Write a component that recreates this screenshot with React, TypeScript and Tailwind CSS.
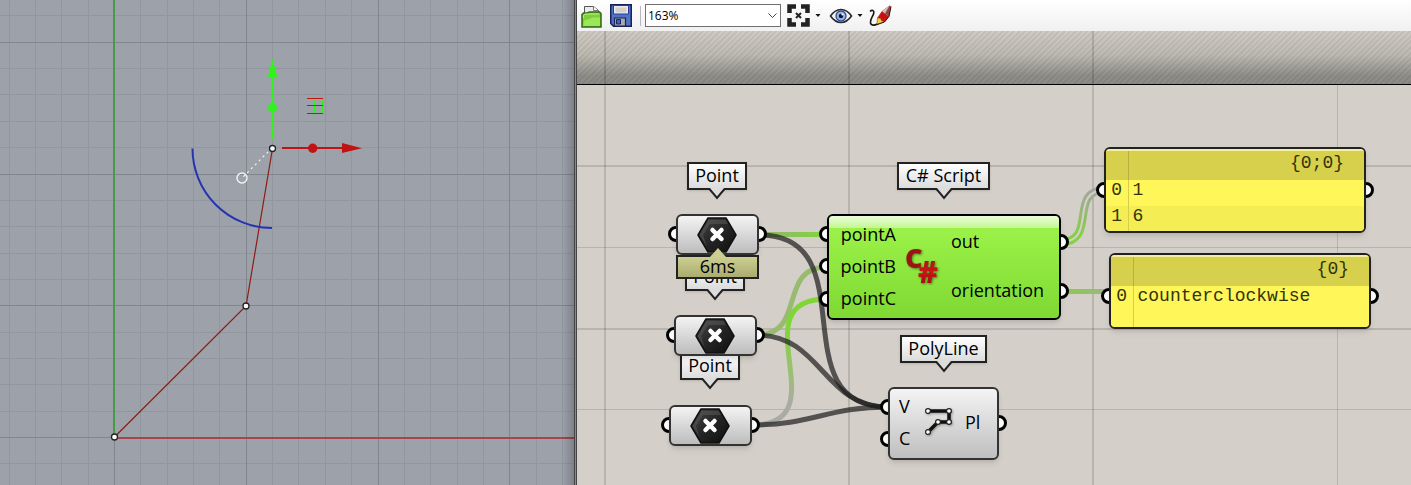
import React from "react";

/* ---------- Viewport with the drawn polyline ---------- */

const Vertex = ({ x, y }: { x: number; y: number }) => (
  <circle cx={x} cy={y} r="3" fill="#fff" stroke="#222" strokeWidth="1.3" />
);

const GRID_STEP = 26.35;
const ORIGIN = { x: 114, y: 437 };

const gridLines = (origin: number, from: number, to: number, major: boolean) => {
  const lines: number[] = [];
  for (let k = from; k <= to; k++) {
    if ((k % 5 === 0) === major) lines.push(Math.round(origin + k * GRID_STEP));
  }
  return lines;
};

const gridPath = (major: boolean) =>
  gridLines(ORIGIN.x, -4, 18, major).map((x) => `M${x + 0.5} 0V4000`).join("") +
  gridLines(ORIGIN.y, -17, 120, major).map((y) => `M0 ${y + 0.5}H600`).join("");

function Viewport() {
  return (
    <section aria-label="Top viewport" className="relative w-[574px] shrink-0 overflow-hidden bg-[#9da2aa]">
      <svg className="absolute inset-0 h-full w-full">
        <path d={gridPath(false)} stroke="#92979f" />
        <path d={gridPath(true)} stroke="#81868e" />
        <path d="M114 0V437" stroke="#489a48" strokeWidth="2" />
        <path d="M114 438H574" stroke="#a5444b" strokeWidth="2" />

        <path d="M272.500 148.500L246 306L114.500 437" fill="none" stroke="#8e1c14" strokeWidth="1.2" />
        <path d="M192.500 148.500A79.500 79.500 0 0 0 272 228" fill="none" stroke="#2634b4" strokeWidth="2" />

        <path d="M272 148L242 178" stroke="#f4f4f4" strokeWidth="1.2" strokeDasharray="2 3.500" />
        <circle cx="242" cy="178" r="5" fill="none" stroke="#f4f4f4" strokeWidth="1.400" />
        <path d="M272.500 139V78" stroke="#33f11f" strokeWidth="2" />
        <circle cx="272.500" cy="108" r="4.700" fill="#33f11f" />
        <path d="M272.500 58.500L277.500 78H267.500Z" fill="#33f11f" />
        <path d="M282 148H343" stroke="#c01414" strokeWidth="2" />
        <circle cx="312.700" cy="148.300" r="4.700" fill="#c01414" />
        <path d="M362 148.200L342 153V143Z" fill="#c01414" />

        <path d="M307.500 98V114M314.500 98V114M322.500 98V114" stroke="#33f11f" strokeWidth="1" />
        <path d="M307 98.500H323M307 105.500H323M307 113.500H323" stroke="#c01414" strokeWidth="1" />

        <Vertex x={272.5} y={148.5} />
        <Vertex x={246} y={306} />
        <Vertex x={114.5} y={437} />
      </svg>
      <div className="absolute inset-y-0 right-0 w-3 bg-gradient-to-r from-transparent to-black/20" />
    </section>
  );
}

/* ---------- Toolbar ---------- */

const Caret = () => (
  <svg width="6" height="4" viewBox="0 0 6 4">
    <path d="M0.500 0H5.500L3 3Z" fill="#111" />
  </svg>
);

function OpenIcon() {
  return (
    <svg width="21" height="24" viewBox="0 0 21 24">
      <path d="M3.500 12V2.500H12.500L17.500 6.500V12" fill="#ececec" stroke="#555" />
      <path d="M12.500 2.500V6.500H17" fill="#fff" stroke="#777" />
      <path d="M1 23V10.500L2.500 9H6.500L8.500 8H18.500L20 9.500V23Z" fill="#7fce39" stroke="#2b6a13" strokeWidth="1.500" />
      <path d="M2 22L3.500 16L9 15L11 13.500H19V22Z" fill="#9be659" />
      <path d="M2.500 14V11.500L4 10H18" fill="none" stroke="#b8f080" />
    </svg>
  );
}

function SaveIcon() {
  return (
    <svg width="22" height="23" viewBox="0 0 22 23">
      <path d="M0.750 0.750H21.250V22.250H3.500L0.750 19.500Z" fill="#4f74c4" stroke="#18215a" strokeWidth="1.500" />
      <path d="M3.500 1.500H18.500V10H3.500Z" fill="#ecebea" stroke="#2635a8" />
      <path d="M5.500 3.500H16.500V8.500H5.500Z" fill="#d3d0cb" />
      <path d="M4.500 14H15.500V22H4.500Z" fill="#a9a9a9" stroke="#1c2450" strokeWidth="1.200" />
      <path d="M6.500 15.500H10.500V20H6.500Z" fill="#3e60cc" stroke="#17246e" />
    </svg>
  );
}

function ZoomExtentsIcon() {
  return (
    <svg width="23" height="23" viewBox="0 0 23 23">
      <path
        d="M2.500 9V2.500H9M14 2.500H20.500V9M20.500 14V20.500H14M9 20.500H2.500V14"
        fill="none"
        stroke="#222"
        strokeWidth="4.500"
      />
      <path d="M9 9L14 14M14 9L9 14" stroke="#222" strokeWidth="2" />
    </svg>
  );
}

function EyeIcon() {
  return (
    <svg width="24" height="16" viewBox="0 0 24 16">
      <path d="M1.500 8Q6 1.500 12 1.500T22.500 8Q18 14.500 12 14.500T1.500 8Z" fill="#f4f4f4" stroke="#2b2b2b" strokeWidth="1.600" />
      <circle cx="12" cy="8" r="5" fill="#9db8e0" stroke="#2b4c9a" strokeWidth="1.300" />
      <circle cx="12" cy="8" r="2.300" fill="#101830" />
      <circle cx="13.500" cy="6.500" r="1.100" fill="#fff" />
    </svg>
  );
}

function SketchIcon() {
  return (
    <svg width="23" height="22" viewBox="0 0 23 22">
      <path d="M1 6.500C3 4.500 5.300 5.500 4.800 8C4 12 0.800 14 1.500 18C2.500 21.500 7 20 9.500 18.500" fill="none" stroke="#151515" strokeWidth="1.600" />
      <path d="M8 19.500L8.500 12.500L12 14L15 17Z" fill="#ead23c" stroke="#6b5a10" strokeWidth="0.600" />
      <path d="M8.500 12.500L13 6L20 11.500L15.500 17L12.500 16L11.500 13.500Z" fill="#c81212" />
      <path d="M13 6L20.500 0.500L22 1.500L20 11.500Z" fill="#8d4743" />
      <path d="M13 6L20.500 0.500L16 8.500Z" fill="#d9bab4" />
      <path d="M8 19.500L15.500 17L20 11.500L22 1.500" fill="none" stroke="#3d0b0b" />
    </svg>
  );
}

function Toolbar() {
  return (
    <header className="flex h-[31px] items-center bg-gradient-to-b from-white to-[#f0f0f0] pl-1">
      <button aria-label="Open file" className="mr-2">
        <OpenIcon />
      </button>
      <button aria-label="Save file">
        <SaveIcon />
      </button>
      <span className="mx-2 h-5 w-px bg-[#b8b8b8]" />
      <div className="relative -ml-1">
        <select
          aria-label="Zoom level"
          className="block h-[23px] w-[136px] appearance-none border border-[#707070] bg-white px-[2px] font-['Open_Sans',sans-serif] text-[12px] leading-none font-normal text-black"
        >
          <option>163%</option>
        </select>
        <svg className="pointer-events-none absolute top-2 right-1" width="9" height="7" viewBox="0 0 9 7">
          <path d="M0.500 1.500L4.500 5.500L8.500 1.500" fill="none" stroke="#444" />
        </svg>
      </div>
      <button aria-label="Zoom extents" className="ml-[6px] flex items-center gap-[5px]">
        <ZoomExtentsIcon />
        <Caret />
      </button>
      <button aria-label="Preview" className="ml-2 flex items-center gap-1">
        <EyeIcon />
        <Caret />
      </button>
      <button aria-label="Sketch" className="ml-[6px]">
        <SketchIcon />
      </button>
    </header>
  );
}

/* ---------- Canvas pieces ---------- */

const Grip = ({ className }: { className: string }) => (
  <span className={"absolute -z-10 size-4 rounded-full border-[3px] border-black bg-white " + className} />
);

const Tag = ({ text, className }: { text: string; className: string }) => (
  <div
    className={
      "absolute flex h-7 items-center justify-center border-2 border-[#222] bg-gradient-to-b from-white to-[#dcdcdc] pb-[2px] text-[18px] leading-none shadow-sm " +
      className
    }
  >
    {text}
    <svg className="absolute top-full left-1/2 -translate-x-1/2" width="18" height="12" viewBox="0 0 18 12">
      <path d="M1 0H17L9 10Z" fill="#dcdcdc" />
      <path d="M0 1H1.500L9 10L16.500 1H18" fill="none" stroke="#222" strokeWidth="2" />
    </svg>
  </div>
);

const PointNode = ({ className }: { className: string }) => (
  <div className={"absolute isolate h-[41px] w-[83px] " + className}>
    <Grip className="top-3 -left-2" />
    <Grip className="top-3 -right-2" />
    <div className="flex h-full items-center justify-center rounded-md border-2 border-[#333] bg-gradient-to-b from-[#f4f4f4] to-[#bdbdbd] pr-[2px] shadow-md">
      <svg width="40" height="36" viewBox="0 0 40 36">
        <defs>
          <linearGradient id="hex" x1="0" y1="0" x2="1" y2="1">
            <stop offset="0" stopColor="#484848" />
            <stop offset="0.5" stopColor="#252525" />
            <stop offset="1" stopColor="#0c0f0c" />
          </linearGradient>
        </defs>
        <path d="M11 1H29L39 18L29 35H11L1 18Z" fill="url(#hex)" stroke="#111" strokeWidth="1.500" strokeLinejoin="round" />
        <path d="M11.500 3H28.500L31 7H13L6 18L10 30L2.800 18Z" fill="#666" opacity="0.4" />
        <path d="M15.500 13L24.500 22M24.500 13L15.500 22" stroke="#fff" strokeWidth="4.500" strokeLinecap="round" />
      </svg>
    </div>
  </div>
);

function ScriptNode() {
  return (
    <div className="absolute top-[183px] left-[250px] isolate h-[106px] w-[234px]">
      <Grip className="top-3 -left-2" />
      <Grip className="top-11 -left-2" />
      <Grip className="top-[77px] -left-2" />
      <Grip className="top-5 -right-2" />
      <Grip className="top-[69px] -right-2" />
      <div className="relative flex h-full rounded-md border-2 border-black bg-gradient-to-b from-[#9ff54b] to-[#7fd932] text-[18px] leading-8 shadow-md">
        <div className="absolute inset-x-0 top-0 h-3 rounded-t bg-gradient-to-b from-white/80 to-white/40" />
        <ul className="relative w-[67px] pt-[2px] text-right">
          <li>pointA</li>
          <li>pointB</li>
          <li>pointC</li>
        </ul>
        <svg
          className="relative mt-7 ml-[9px] overflow-visible drop-shadow-[1px_1px_1px_rgba(40,60,10,0.6)]"
          width="40"
          height="44"
          viewBox="0 0 40 44"
          role="img"
          aria-label="C#"
        >
          <defs>
            <linearGradient id="csharp" x1="0" y1="0" x2="0" y2="1">
              <stop offset="0" stopColor="#a01010" />
              <stop offset="0.5" stopColor="#c81616" />
              <stop offset="1" stopColor="#8a0c0c" />
            </linearGradient>
          </defs>
          <g className="font-['Open_Sans',sans-serif] font-extrabold">
            <text x="0" y="24" fontSize="27" fill="#9a1414">C</text>
            <text x="13" y="39" fontSize="30" fill="url(#csharp)">#</text>
          </g>
        </svg>
        <ul className="relative ml-[6px] flex flex-col gap-[17px] pt-[9px]">
          <li>out</li>
          <li>orientation</li>
        </ul>
      </div>
    </div>
  );
}

function PolylineNode() {
  return (
    <div className="absolute top-[356px] left-[311px] isolate h-[73px] w-[111px]">
      <Grip className="top-3 -left-2" />
      <Grip className="top-11 -left-2" />
      <Grip className="top-7 -right-2" />
      <div className="flex h-full items-center rounded-md border-2 border-[#333] bg-gradient-to-b from-[#f4f4f4] to-[#bfbfbf] pb-1 pl-[9px] text-[18px] leading-8 shadow-md">
        <ul className="w-6">
          <li>V</li>
          <li>C</li>
        </ul>
        <svg className="drop-shadow-[1px_1px_1px_rgba(60,40,20,0.4)]" width="30" height="32" viewBox="0 0 30 32">
          <path d="M5 5H26V16H15L5 26" fill="none" stroke="#111" strokeWidth="3.500" />
          {[[5, 5], [26, 5], [26, 16], [15, 16], [5, 26]].map(([x, y]) => (
            <circle key={x + "-" + y} cx={x} cy={y} r="2.400" fill="#fff" stroke="#222" strokeWidth="1.200" />
          ))}
        </svg>
        <span className="ml-3">Pl</span>
      </div>
    </div>
  );
}

function Panel({ path, rows, className, label }: { path: string; rows: string[]; className: string; label: string }) {
  return (
    <div className={"absolute isolate w-[262px] " + className}>
      <Grip className="top-[35px] -left-2" />
      <Grip className="top-[35px] -right-2" />
      <div className="h-full overflow-hidden rounded-md border-2 border-[#222] bg-[#fff75a] shadow-md">
        <table
          aria-label={label}
          className="h-full w-full table-fixed border-collapse font-['Liberation_Mono',monospace] text-[18px] leading-none font-normal text-[#33330a]"
        >
          <thead>
            <tr className="h-[30px] border-t-2 border-[#f3eea0] bg-[#d7d04d]">
              <th className="w-[22px] border-r border-[#b8b13f]" />
              <th className="pr-5 pb-[6px] text-right font-normal">{path}</th>
            </tr>
          </thead>
          <tbody>
            {rows.map((row, i) => (
              <tr key={i} className="h-[26px] odd:bg-[#fff75a] even:bg-[#f4ed53]">
                <td className="border-r border-[#d5ce48] pb-[6px] text-center">{i}</td>
                <td className="pb-[6px] pl-1">{row}</td>
              </tr>
            ))}
            <tr className={rows.length % 2 ? "bg-[#fff75a]" : "bg-[#f4ed53]"}>
              <td className="border-r border-[#d5ce48]" />
              <td />
            </tr>
          </tbody>
        </table>
      </div>
    </div>
  );
}

function Wires() {
  return (
    <svg className="absolute inset-0 h-full w-full" fill="none">
      <defs>
        <linearGradient id="wireFlat" gradientUnits="userSpaceOnUse" x1="759" y1="0" x2="827" y2="0">
          <stop offset="0" stopColor="#97b277" />
          <stop offset="1" stopColor="#80d636" />
        </linearGradient>
        <linearGradient id="wireRise" gradientUnits="userSpaceOnUse" x1="0" y1="425" x2="0" y2="299">
          <stop offset="0" stopColor="#aaaaa6" />
          <stop offset="0.2" stopColor="#a8ada0" />
          <stop offset="0.35" stopColor="#9fbb80" />
          <stop offset="0.8" stopColor="#80d636" />
        </linearGradient>
        <linearGradient id="wireOut" gradientUnits="userSpaceOnUse" x1="0" y1="242" x2="0" y2="190">
          <stop offset="0" stopColor="#80d636" />
          <stop offset="1" stopColor="#a5a5a0" />
        </linearGradient>
        <linearGradient id="wireText" gradientUnits="userSpaceOnUse" x1="1061" y1="0" x2="1110" y2="0">
          <stop offset="0" stopColor="#86cc48" />
          <stop offset="1" stopColor="#a0b582" />
        </linearGradient>
      </defs>
      <g transform="translate(-577 -31)">
        <g stroke="#000" strokeOpacity="0.13">
          <path d="M605 31V2000M849 31V2000M1093 31V2000" strokeWidth="2" />
          <path d="M1337.500 85V2000" strokeWidth="1" />
          <path d="M577 166H4000M577 329H4000" strokeWidth="2" />
          <path d="M577 247.500H4000M577 409.500H4000" strokeWidth="1" />
        </g>
        <g strokeWidth="5">
          <path d="M759 234.500L827 234.400" stroke="url(#wireFlat)" />
          <path d="M757 335C807 335 777 267 827 267" stroke="#98bb70" />
          <path d="M752 425C842 425 737 299 827 299" stroke="url(#wireRise)" />
          <path d="M1061 291.500L1110 291.400" stroke="url(#wireText)" />
          <g stroke="#1c1c1c" strokeOpacity="0.7">
            <path d="M759 235C869 235 778 407 888 407" />
            <path d="M757 335C822 335 823 407 888 407" />
            <path d="M752 425C812 425 828 407 888 407" />
          </g>
        </g>
        <path d="M1061 242C1098 242 1068 190 1105 190" stroke="url(#wireOut)" strokeWidth="8" />
        <path d="M1061 242C1098 242 1068 190 1105 190" stroke="#d4d0c8" strokeWidth="2" />
      </g>
    </svg>
  );
}

function Canvas() {
  return (
    <main className="relative flex-1 overflow-hidden bg-[#d4cfc8]">
      <div className="h-[53px] bg-[repeating-linear-gradient(135deg,rgba(0,0,0,0.06)_0px,rgba(0,0,0,0.06)_2px,transparent_2px,transparent_4px),linear-gradient(to_bottom,#d0ccc4,#bdbab2_45%,#8e8d87_85%,#8c8b85)]" />
      <div className="h-px bg-black" />
      <Wires />

      <Tag text="Point" className="top-[131px] left-[110px] w-[60px]" />
      <Tag text="Point" className="top-[232px] left-[108px] w-[60px]" />
      <PointNode className="top-[183px] left-[99px]" />
      <div className="absolute top-[224px] left-[99px] flex h-6 w-[83px] items-center justify-center border-2 border-[#222] bg-gradient-to-b from-[#cdce92] to-[#abac6e] pb-[3px] text-[18px] leading-none">
        6ms
        <svg className="absolute bottom-full left-1/2 -translate-x-1/2" width="18" height="10" viewBox="0 0 18 10">
          <path d="M1 10L9 1L17 10Z" fill="#cdce92" />
        </svg>
      </div>

      <Tag text="Point" className="top-[321px] left-[103px] w-[60px]" />
      <PointNode className="top-[284px] left-[97px]" />
      <PointNode className="top-[374px] left-[92px]" />

      <Tag text="C# Script" className="top-[131px] left-[320px] w-[93px]" />
      <ScriptNode />
      <Tag text="PolyLine" className="top-[304px] left-[323px] w-[87px]" />
      <PolylineNode />

      <Panel label="Script output" path="{0;0}" rows={["1", "6"]} className="top-[116px] left-[527px] h-[86px]" />
      <Panel label="Orientation" path="{0}" rows={["counterclockwise"]} className="top-[222px] left-[532px] h-[76px]" />
    </main>
  );
}

export default function App() {
  return (
    <div className="flex min-h-screen font-['Open_Sans',sans-serif] font-normal text-black">
      <Viewport />
      <div className="w-[3px] shrink-0 border-x border-[#444] bg-[#8a8a8a]" />
      <div className="flex min-w-0 flex-1 flex-col">
        <Toolbar />
        <Canvas />
      </div>
    </div>
  );
}
